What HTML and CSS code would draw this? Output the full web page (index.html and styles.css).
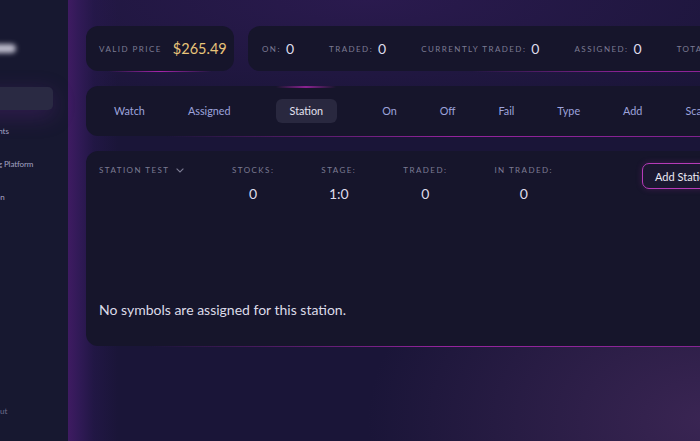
FILE: index.html
```html
<!DOCTYPE html>
<html>
<head>
<meta charset="utf-8">
<link rel="stylesheet" href="styles.css">
</head>
<body>
<div class="app">
  <aside class="sidebar">
    <div class="logo"></div>
    <nav class="nav">
      <div class="nav-item active">Dashboard</div>
      <div class="nav-item">Accounts</div>
      <div class="nav-item">Trading Platform</div>
      <div class="nav-item">Position</div>
    </nav>
    <div class="logout">Logout</div>
  </aside>
  <main class="main">
    <div class="top-row">
      <section class="card price-card">
        <span class="label">Valid Price</span>
        <span class="price">$265.49</span>
      </section>
      <section class="card stats-card">
        <div class="stat"><span class="label">On:</span><span class="val">0</span></div>
        <div class="stat"><span class="label">Traded:</span><span class="val">0</span></div>
        <div class="stat"><span class="label">Currently Traded:</span><span class="val">0</span></div>
        <div class="stat"><span class="label">Assigned:</span><span class="val">0</span></div>
        <div class="stat"><span class="label">Total:</span><span class="val">0</span></div>
      </section>
    </div>
    <section class="card tabs-card">
      <div class="tab">Watch</div>
      <div class="tab">Assigned</div>
      <div class="tab active">Station</div>
      <div class="tab">On</div>
      <div class="tab">Off</div>
      <div class="tab">Fail</div>
      <div class="tab">Type</div>
      <div class="tab">Add</div>
      <div class="tab">Scan</div>
    </section>
    <section class="card station-card">
      <div class="station-head">
        <div class="station-select label">Station Test
          <svg class="chev" width="8" height="5" viewBox="0 0 8 5"><path d="M0.6 0.6 L4 4 L7.4 0.6" fill="none" stroke="#7c7b93" stroke-width="1.1"/></svg>
        </div>
        <div class="col"><span class="label">Stocks:</span><span class="col-val">0</span></div>
        <div class="col"><span class="label">Stage:</span><span class="col-val">1:0</span></div>
        <div class="col"><span class="label">Traded:</span><span class="col-val">0</span></div>
        <div class="col"><span class="label">In Traded:</span><span class="col-val">0</span></div>
        <button class="add-btn">Add Station</button>
      </div>
      <p class="empty">No symbols are assigned for this station.</p>
    </section>
  </main>
</div>
</body>
</html>
```
FILE: styles.css
```css
* { box-sizing: border-box; }
html, body {
  margin: 0;
  width: 700px;
  height: 441px;
  overflow: hidden;
  background: #171830;
  font-family: Lato, "Noto Sans", sans-serif;
}
.app {
  display: flex;
  width: 700px;
  height: 441px;
  overflow: hidden;
}
.sidebar {
  flex: 0 0 130px;
  margin-left: -62px;
  background: #171830;
  display: flex;
  flex-direction: column;
  padding-top: 44px;
  position: relative;
  z-index: 1;
}
.logo {
  width: 40px;
  height: 9px;
  margin-left: 38px;
  background: #d8d6e6;
  border-radius: 5px;
  filter: blur(2.5px);
  opacity: 0.85;
}
.nav {
  margin-top: 34px;
  display: flex;
  flex-direction: column;
  gap: 10px;
}
.nav-item {
  height: 23px;
  line-height: 23px;
  padding-left: 39px;
  margin-right: 15px;
  font-size: 8px;
  letter-spacing: -0.1px;
  color: #a3a3c2;
  border-radius: 5px;
  white-space: nowrap;
}
.nav-item.active {
  background: #2a2a43;
  color: transparent;
  box-shadow: 0 6px 22px rgba(120, 40, 160, 0.28);
}
.logout {
  margin-top: auto;
  margin-bottom: 25px;
  padding-left: 45px;
  font-size: 8px;
  color: #6f6d8c;
}
.main {
  flex: 1;
  min-width: 0;
  overflow: hidden;
  padding: 26px 0 0 18px;
  display: flex;
  flex-direction: column;
  gap: 15px;
  background:
    linear-gradient(90deg, #3f1b62 0px, #321a58 10px, rgba(40,24,80,0.5) 26px, rgba(26,21,56,0) 50px),
    radial-gradient(ellipse 340px 220px at 640px 420px, #3a2553 0%, rgba(58,37,83,0.6) 40%, rgba(26,21,56,0) 100%),
    radial-gradient(ellipse 500px 120px at 300px 0px, #2a1a4e 0%, rgba(26,21,56,0) 100%),
    #1a1538;
}
.card {
  background: #16152b;
  border-radius: 12px;
  position: relative;
  flex-shrink: 0;
}
.card::after {
  content: "";
  position: absolute;
  left: 10%;
  right: 0;
  bottom: -1px;
  height: 1.5px;
  background: linear-gradient(90deg, rgba(190,40,190,0), rgba(190,40,190,0.75) 40%, rgba(170,40,180,0.6) 100%);
  filter: blur(0.3px);
}
.top-row {
  display: flex;
  gap: 14px;
  width: 800px;
}
.label {
  font-size: 8px;
  letter-spacing: 1.45px;
  text-transform: uppercase;
  color: #7c7b93;
  white-space: nowrap;
}
.price-card {
  width: 148px;
  height: 45px;
  display: flex;
  align-items: center;
  gap: 11px;
  padding-left: 13px;
}
.price-card::after {
  left: 15%;
  right: 15%;
  background: linear-gradient(90deg, rgba(190,40,190,0), rgba(200,40,200,0.8) 50%, rgba(190,40,190,0));
}
.price {
  font-size: 14.5px;
  color: #e8c47a;
}
.stats-card {
  flex: 1;
  height: 45px;
  display: flex;
  align-items: center;
  gap: 35px;
  padding-left: 14px;
}
.stats-card::after {
  left: 35%;
}
.stat {
  display: flex;
  align-items: center;
  gap: 5px;
}
.val {
  font-size: 14px;
  color: #dedbeb;
}
.tabs-card {
  width: 800px;
  height: 50px;
  display: flex;
  align-items: center;
  gap: 15px;
  padding-left: 14px;
}
.tabs-card::before {
  content: "";
  position: absolute;
  left: 190px;
  width: 60px;
  top: 0;
  height: 1.5px;
  background: linear-gradient(90deg, rgba(190,40,190,0), rgba(190,40,190,0.7), rgba(190,40,190,0));
}
.tab {
  padding: 0 14px;
  height: 24px;
  line-height: 24px;
  font-size: 10.8px;
  color: #9da3dc;
  border-radius: 6px;
  white-space: nowrap;
}
.tab.active {
  background: #29283f;
  color: #e4e2ef;
  margin: 0 16px;
}
.station-card {
  width: 800px;
  height: 195px;
  display: flex;
  flex-direction: column;
  padding: 12px 13px 0;
}
.station-card::after {
  left: 8%;
}
.station-head {
  display: flex;
  align-items: flex-start;
}
.station-select {
  width: 133px;
  display: flex;
  align-items: center;
  gap: 7px;
  height: 12px;
  margin-top: 1px;
}
.chev { display: block; }
.col {
  display: flex;
  flex-direction: column;
  align-items: center;
  gap: 9px;
  margin-right: 47px;
  margin-top: 1px;
}
.col .label {
  height: 12px;
  line-height: 12px;
}
.col-val {
  font-size: 14px;
  color: #dedbeb;
}
.add-btn {
  margin-left: 42px;
  height: 26px;
  padding: 0 12px;
  background: #1b1830;
  border: 1.5px solid #b63bb8;
  border-radius: 7px;
  color: #eceaf4;
  font-family: Lato, "Noto Sans", sans-serif;
  font-size: 11px;
  white-space: nowrap;
  box-shadow: 0 0 6px rgba(180, 50, 180, 0.25);
}
.empty {
  margin: auto 0 28px;
  font-size: 14px;
  color: #dcdbe8;
}
```
